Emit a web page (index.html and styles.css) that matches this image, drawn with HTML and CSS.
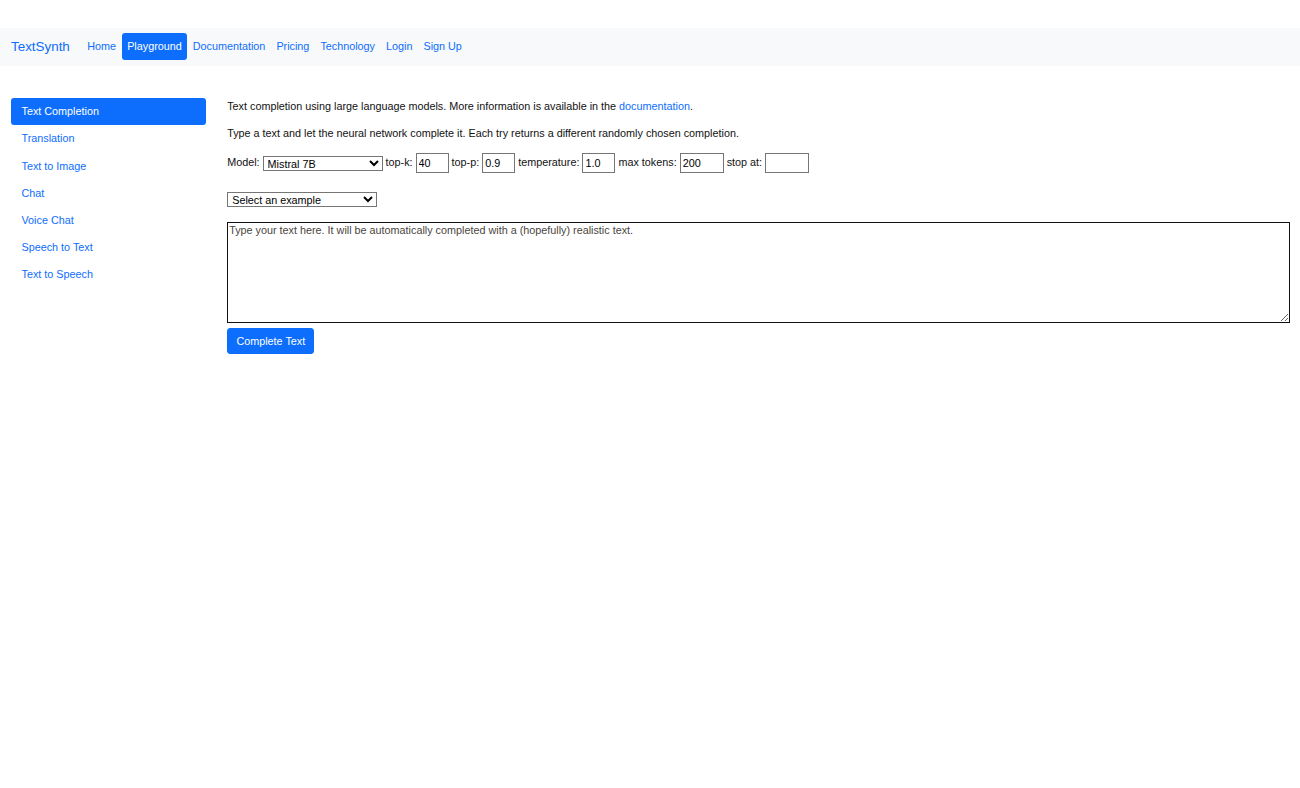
FILE: index.html
```html
<!DOCTYPE html>
<html lang="en">
<head>
  <meta charset="UTF-8" />
  <meta name="viewport" content="width=device-width, initial-scale=1.0"/>
  <title>TextSynth Playground</title>
  <link rel="stylesheet" href="styles.css">
</head>
<body>
  <div class="top-gap"></div>
  <nav class="navbar">
    <a class="brand" href="#">TextSynth</a>
    <ul class="nav">
      <li><a class="nav-link" href="#">Home</a></li>
      <li><a class="nav-link active" href="#">Playground</a></li>
      <li><a class="nav-link" href="#">Documentation</a></li>
      <li><a class="nav-link" href="#">Pricing</a></li>
      <li><a class="nav-link" href="#">Technology</a></li>
      <li><a class="nav-link" href="#">Login</a></li>
      <li><a class="nav-link" href="#">Sign Up</a></li>
    </ul>
  </nav>

  <div class="page">
    <aside class="sidebar">
      <a class="side-link active" href="#">Text Completion</a>
      <a class="side-link" href="#">Translation</a>
      <a class="side-link" href="#">Text to Image</a>
      <a class="side-link" href="#">Chat</a>
      <a class="side-link" href="#">Voice Chat</a>
      <a class="side-link" href="#">Speech to Text</a>
      <a class="side-link" href="#">Text to Speech</a>
    </aside>

    <main class="main">
      <p>Text completion using large language models. More information is available in the <a href="#">documentation</a>.</p>
      <p>Type a text and let the neural network complete it. Each try returns a different randomly chosen completion.</p>

      <div class="params">
        Model: <select class="model-select">
          <option>Mistral 7B</option>
        </select>
        top-k: <input class="num" type="text" value="40">
        top-p: <input class="num" type="text" value="0.9">
        temperature: <input class="num" type="text" value="1.0">
        max tokens: <input class="num wide" type="text" value="200">
        stop at: <input class="num wide" type="text" value="">
      </div>

      <div class="examples">
        <select class="example-select">
          <option>Select an example</option>
        </select>
      </div>

      <textarea class="prompt" placeholder="Type your text here. It will be automatically completed with a (hopefully) realistic text."></textarea>

      <button class="btn">Complete Text</button>
    </main>
  </div>
</body>
</html>
```

FILE: styles.css
```css
* {
  box-sizing: border-box;
}

body {
  margin: 0;
  font-family: "Liberation Sans", Arial, sans-serif;
  font-size: 10.8px;
  line-height: 16.8px;
  color: #111;
  background: #fff;
}

a {
  color: #0d6efd;
  text-decoration: none;
}

.top-gap {
  height: 28px;
}

.navbar {
  display: flex;
  align-items: center;
  height: 38px;
  padding: 0 11px 1px;
  background: #f8f9fa;
}

.brand {
  font-size: 13.4px;
  line-height: 21px;
  margin-right: 12px;
}

.nav {
  display: flex;
  list-style: none;
  margin: 0;
  padding: 0;
}

.nav-link {
  display: block;
  padding: 5px 5.5px;
  border-radius: 3px;
}

.nav-link.active {
  background: #0d6efd;
  color: #fff;
}

.page {
  display: flex;
  padding-top: 32px;
}

.sidebar {
  width: 216.7px;
  padding: 0 10.5px;
  display: flex;
  flex-direction: column;
}

.side-link {
  display: block;
  padding: 5.2px 11px;
  border-radius: 3px;
}

.side-link.active {
  background: #0d6efd;
  color: #fff;
}

.main {
  flex: 1;
  padding: 0 10.5px;
}

.main p {
  margin: 0 0 10.2px;
}

.params {
  line-height: 20px;
}

.params select,
.params input {
  font-family: "Liberation Sans", Arial, sans-serif;
  font-size: 10.8px;
  vertical-align: middle;
  color: #000;
}

.model-select {
  width: 120px;
  height: 15px;
  padding: 0;
  border: 1px solid #767676;
  border-radius: 0;
  background: #fff;
}

.num {
  width: 33px;
  height: 20px;
  padding: 1px 2px;
  border: 1px solid #767676;
  border-radius: 0;
}

.num.wide {
  width: 44px;
}

.examples {
  margin-top: 19px;
  height: 15px;
}

.example-select {
  display: block;
  width: 150px;
  height: 15px;
  padding: 0;
  font-family: "Liberation Sans", Arial, sans-serif;
  font-size: 10.8px;
  color: #000;
  border: 1px solid #767676;
  border-radius: 0;
  background: #fff;
}

.prompt {
  display: block;
  width: 100%;
  height: 101px;
  margin-top: 15px;
  padding: 1px 1px;
  font-family: "Liberation Sans", Arial, sans-serif;
  font-size: 10.8px;
  border: 1.5px solid #111;
  border-radius: 0;
}

.prompt::placeholder {
  color: #4a4540;
}

.btn {
  display: block;
  margin-top: 5px;
  padding: 3.5px 8.2px;
  font-family: "Liberation Sans", Arial, sans-serif;
  font-size: 10.8px;
  line-height: 16.8px;
  color: #fff;
  background: #0d6efd;
  border: 1px solid #0d6efd;
  border-radius: 3px;
}
```
